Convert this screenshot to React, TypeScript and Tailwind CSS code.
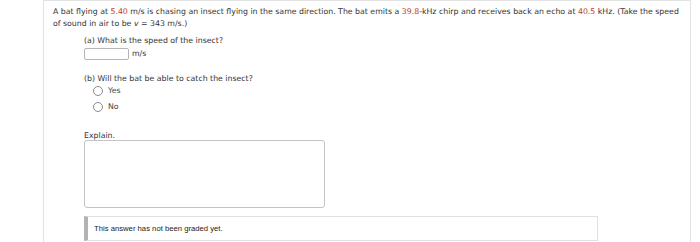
const verdana = { fontFamily: '"DejaVu Sans", Verdana, sans-serif' };

function Radio({ label }: { label: string }) {
  return (
    <label className="flex items-center gap-[5px] h-[16px]">
      <span className="w-[10px] h-[10px] rounded-full border border-[#8a8a8a] bg-white" />
      <span className="text-[#444]">{label}</span>
    </label>
  );
}

export default function App() {
  return (
    <div className="w-[700px] h-[242px] bg-white overflow-hidden">
      <div className="ml-[43px] mr-[9px] h-full border-l border-r border-t border-[#e2e2e2] pt-[5px] pl-[9px] pr-[8px] text-[7.8px] leading-[12px] text-[#333]" style={verdana}>
        <p>
          A bat flying at <span className="text-[#c0392b]">5.40</span> m/s is chasing an insect flying in the same
          direction. The bat emits a <span className="text-[#c0392b]">39.8</span>-kHz chirp and receives back an echo at{" "}
          <span className="text-[#c0392b]">40.5</span> kHz. (Take the speed of sound in air to be <i>v</i> = 343 m/s.)
        </p>
        <div className="pl-[31px] mt-[5px]">
          <p>(a) What is the speed of the insect?</p>
          <div className="flex items-center gap-[3px] mt-[1px]">
            <div className="w-[45px] h-[12px] rounded-[2px] border border-[#b5b5b5]" />
            <span>m/s</span>
          </div>
          <p className="mt-[13px]">(b) Will the bat be able to catch the insect?</p>
          <div className="pl-[9px] mt-[-2px] flex flex-col">
            <Radio label="Yes" />
            <Radio label="No" />
          </div>
          <p className="mt-[15px]">Explain.</p>
          <div className="w-[241px] h-[68px] mt-[-2px] rounded-[3px] border border-[#c4c4c4]" />
          <div className="w-[514px] h-[25px] mt-[8px] border border-[#e0e0e0] border-l-[4px] border-l-[#b3b3b3] flex items-center pl-[6px] text-[7.7px] text-[#222]" style={{ fontFamily: '"Liberation Sans", Arial, sans-serif' }}>
            This answer has not been graded yet.
          </div>
        </div>
      </div>
    </div>
  );
}
